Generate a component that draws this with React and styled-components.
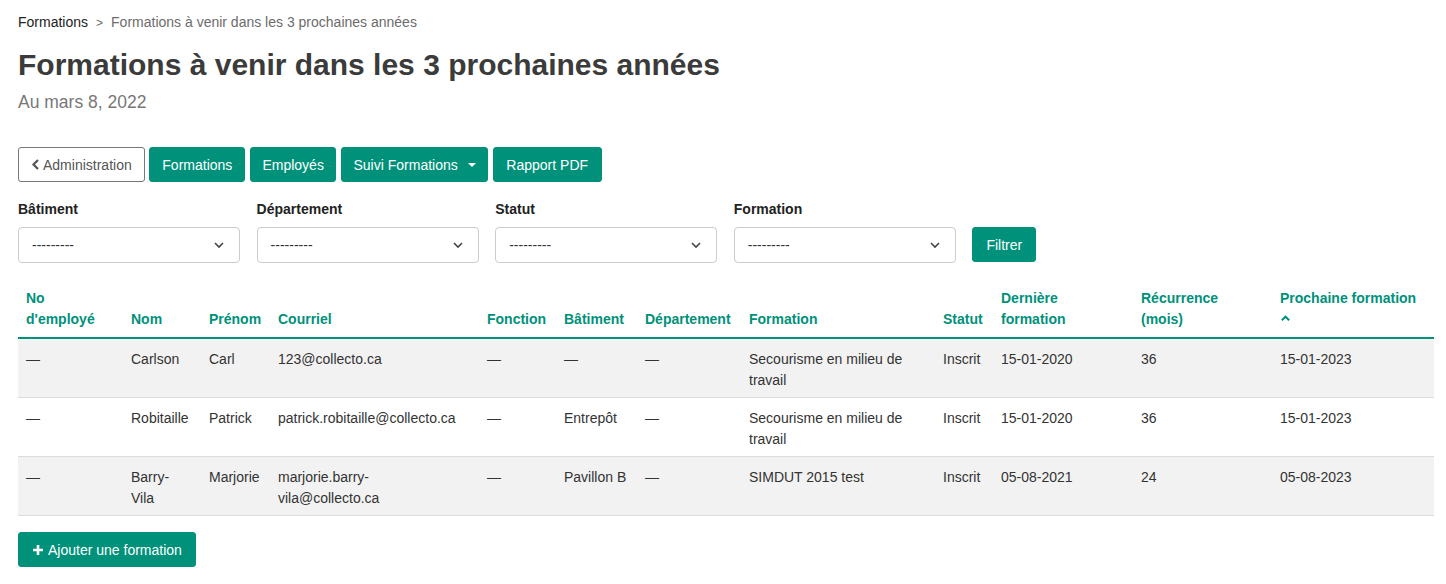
import React from 'react'
import styled, { createGlobalStyle } from 'styled-components'

const TEAL = '#00917a'

const Global = createGlobalStyle`
  body {
    margin: 0;
    font-family: "Liberation Sans", Arial, sans-serif;
    font-size: 14px;
    color: #333;
    background: #fff;
  }
`

const Page = styled.div`
  padding: 12px 12px 16px 18px;
`

const Crumbs = styled.div`
  font-size: 14px;
  color: #6c6c6c;
  line-height: 20px;
  a {
    color: #222;
    text-decoration: none;
  }
  span.sep {
    margin: 0 8px;
    font-size: 12px;
  }
`

const Title = styled.h1`
  margin: 15px 0 0;
  font-size: 30px;
  font-weight: bold;
  color: #3b3b3b;
  line-height: 34px;
`

const Sub = styled.div`
  margin-top: 9px;
  font-size: 17.5px;
  color: #777;
  line-height: 22px;
`

const Toolbar = styled.div`
  display: flex;
  gap: 4.6px;
  margin-top: 34px;
`

const Btn = styled.button`
  height: 35px;
  padding: 0 ${p => p.$pad || 13}px;
  border-radius: 3px;
  font-family: inherit;
  font-size: 14px;
  display: inline-flex;
  align-items: center;
  gap: 6px;
  cursor: pointer;
  border: 1px solid ${p => (p.$outline ? '#777' : TEAL)};
  background: ${p => (p.$outline ? '#fff' : TEAL)};
  color: ${p => (p.$outline ? '#555' : '#fff')};
`

const Caret = styled.span`
  display: inline-block;
  margin-left: 4px;
  border-left: 4px solid transparent;
  border-right: 4px solid transparent;
  border-top: 4px solid #fff;
`

const Filters = styled.div`
  display: flex;
  align-items: flex-end;
  gap: 16.6px;
  margin-top: 19px;
`

const Field = styled.div`
  display: flex;
  flex-direction: column;
  gap: 10px;
  width: 222px;
  label {
    font-weight: bold;
    font-size: 14px;
    color: #222;
    line-height: 16px;
  }
`

const Select = styled.div`
  height: 36px;
  border: 1px solid #ccc;
  border-radius: 4px;
  box-sizing: border-box;
  display: flex;
  align-items: center;
  justify-content: space-between;
  padding: 0 14px 0 13px;
  color: #333;
  font-size: 14px;
`

const FilterBtn = styled(Btn)`
  height: 35px;
  margin-bottom: 1px;
`

const Table = styled.table`
  margin-top: 23px;
  width: 1416px;
  border-collapse: collapse;
  table-layout: fixed;
  th {
    text-align: left;
    vertical-align: bottom;
    color: ${TEAL};
    font-weight: bold;
    font-size: 14px;
    line-height: 21px;
    padding: 2px 10px 7px 8px;
    border-bottom: 2px solid ${TEAL};
  }
  td {
    vertical-align: top;
    line-height: 21px;
    padding: 10px 10px 6px 8px;
    border-bottom: 1px solid #dcdcdc;
    color: #333;
  }
  tbody tr:nth-child(odd) {
    background: #f2f2f2;
  }
`

const AddBtn = styled(Btn)`
  margin-top: 16px;
  gap: 4px;
`

const Chevron = ({ up, color = '#444', size = 12 }) => (
  <svg width={size} height={size} viewBox="0 0 12 12">
    <path
      d={up ? 'M2 8 L6 4 L10 8' : 'M2 4 L6 8 L10 4'}
      fill="none"
      stroke={color}
      strokeWidth={up ? 2.2 : 1.6}
    />
  </svg>
)

const cols = [105, 78, 69, 209, 77, 81, 104, 194, 58, 140, 139, 162]

const rows = [
  ['—', 'Carlson', 'Carl', '123@collecto.ca', '—', '—', '—', 'Secourisme en milieu de travail', 'Inscrit', '15-01-2020', '36', '15-01-2023'],
  ['—', 'Robitaille', 'Patrick', 'patrick.robitaille@collecto.ca', '—', 'Entrepôt', '—', 'Secourisme en milieu de travail', 'Inscrit', '15-01-2020', '36', '15-01-2023'],
  ['—', 'Barry-Vila', 'Marjorie', 'marjorie.barry-vila@collecto.ca', '—', 'Pavillon B', '—', 'SIMDUT 2015 test', 'Inscrit', '05-08-2021', '24', '05-08-2023'],
]

const filters = ['Bâtiment', 'Département', 'Statut', 'Formation']

export default function App() {
  return (
    <Page>
      <Global />
      <Crumbs>
        <a href="#">Formations</a>
        <span className="sep">&gt;</span>
        Formations à venir dans les 3 prochaines années
      </Crumbs>
      <Title>Formations à venir dans les 3 prochaines années</Title>
      <Sub>Au mars 8, 2022</Sub>

      <Toolbar>
        <Btn $outline $pad={12} style={{ gap: 3 }}>
          <svg width="9" height="11" viewBox="0 0 9 11">
            <path d="M7 1 L2.5 5.5 L7 10" fill="none" stroke="#555" strokeWidth="2.2" />
          </svg>
          Administration
        </Btn>
        <Btn $pad={12}>Formations</Btn>
        <Btn $pad={11.5}>Employés</Btn>
        <Btn $pad={11.5}>
          Suivi Formations <Caret />
        </Btn>
        <Btn $pad={12.5}>Rapport PDF</Btn>
      </Toolbar>

      <Filters>
        {filters.map(f => (
          <Field key={f}>
            <label>{f}</label>
            <Select>
              <span>---------</span>
              <Chevron />
            </Select>
          </Field>
        ))}
        <FilterBtn>Filtrer</FilterBtn>
      </Filters>

      <Table>
        <colgroup>
          {cols.map((w, i) => (
            <col key={i} style={{ width: w }} />
          ))}
        </colgroup>
        <thead>
          <tr>
            <th>No d'employé</th>
            <th>Nom</th>
            <th>Prénom</th>
            <th>Courriel</th>
            <th>Fonction</th>
            <th>Bâtiment</th>
            <th>Département</th>
            <th>Formation</th>
            <th>Statut</th>
            <th>Dernière formation</th>
            <th>Récurrence (mois)</th>
            <th>
              Prochaine formation
              <br />
              <Chevron up color={TEAL} size={11} />
            </th>
          </tr>
        </thead>
        <tbody>
          {rows.map((r, i) => (
            <tr key={i}>
              {r.map((c, j) => (
                <td key={j}>{c}</td>
              ))}
            </tr>
          ))}
        </tbody>
      </Table>

      <AddBtn $pad={13}>
        <svg width="12" height="12" viewBox="0 0 12 12">
          <path d="M6 1 V11 M1 6 H11" stroke="#fff" strokeWidth="2.6" />
        </svg>
        Ajouter une formation
      </AddBtn>
    </Page>
  )
}
